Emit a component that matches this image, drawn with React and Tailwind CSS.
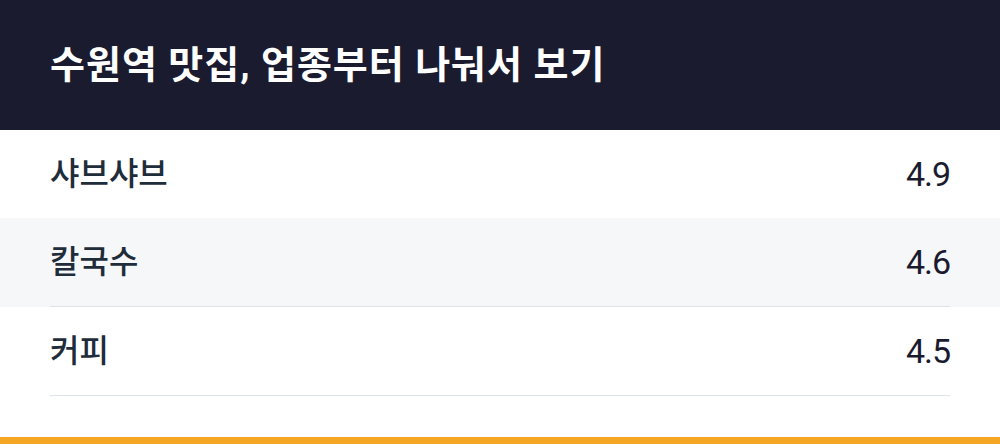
import React from "react";

const rows = [
  { name: "샤브샤브", score: "4.9", bg: "bg-white", border: false },
  { name: "칼국수", score: "4.6", bg: "bg-[#f6f7f9]", border: true },
  { name: "커피", score: "4.5", bg: "bg-white", border: true },
];

function App() {
  return (
    <div
      className="w-[1000px] h-[444px] bg-white flex flex-col"
      style={{ fontFamily: 'Roboto, "Noto Sans CJK KR", sans-serif' }}
    >
      {/* Header */}
      <header className="h-[130px] shrink-0 bg-[#1b1b2f] flex items-center px-[50px]">
        <h1 className="text-[38px] font-bold text-white leading-none tracking-[0.026em]">
          수원역 맛집, 업종부터 나눠서 보기
        </h1>
      </header>

      {/* List */}
      <div>
        {rows.map((row) => (
          <div key={row.name} className={row.bg}>
            <div
              className={
                row.border
                  ? "mx-[50px] h-[89px] flex items-center justify-between border-b border-[#dfe4ea]"
                  : "mx-[50px] h-[88px] flex items-center justify-between"
              }
            >
              <span className="text-[32px] font-medium text-[#1f2d3a] leading-none">
                {row.name}
              </span>
              <span className="font-['Roboto'] text-[34px] text-[#1b1b2f] tracking-[-0.03em] leading-none">
                {row.score}
              </span>
            </div>
          </div>
        ))}
      </div>

      <div className="mt-[41px] h-2 bg-[#f5a623]"></div>
    </div>
  );
}

export default App;
